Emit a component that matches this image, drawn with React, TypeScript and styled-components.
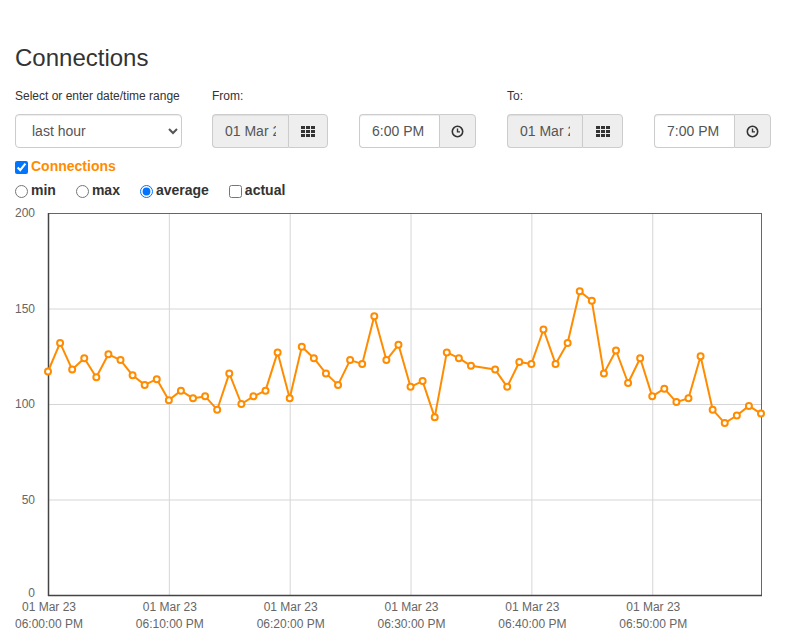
import React from "react";
import styled, { createGlobalStyle } from "styled-components";

const GlobalStyle = createGlobalStyle`
  html, body { margin: 0; padding: 0; background: #fff; }
  body {
    font-family: "Liberation Sans", Arial, Helvetica, sans-serif;
    font-size: 14px;
    line-height: 1.42857;
    color: #333;
  }
  * { box-sizing: border-box; }
`;

const Page = styled.div`
  padding: 0 15px;
`;

const Title = styled.h2`
  margin: 45px 0 17px;
  font-size: 24px;
  font-weight: 400;
  line-height: 1.1;
  color: #333;
`;

const FilterRow = styled.div`
  display: flex;
  align-items: flex-end;
`;

const Field = styled.div<{ $ml?: number }>`
  display: flex;
  flex-direction: column;
  margin-left: ${(p) => p.$ml ?? 0}px;
`;

const FieldLabel = styled.label`
  display: block;
  height: 17px;
  margin-bottom: 9px;
  font-size: 12px;
  line-height: 17px;
  color: #333;
`;

const Select = styled.select`
  width: 167px;
  height: 34px;
  padding: 6px 12px;
  font-family: "Liberation Sans", Arial, sans-serif;
  font-size: 14px;
  color: #555;
  background: #fff;
  border: 1px solid #ccc;
  border-radius: 4px;
  box-shadow: inset 0 1px 1px rgba(0, 0, 0, 0.075);
`;

const Group = styled.div`
  display: flex;
  height: 34px;
`;

const GroupInput = styled.input<{ $w: number; $grey?: boolean }>`
  width: ${(p) => p.$w}px;
  height: 34px;
  padding: 6px 12px;
  font-family: "Liberation Sans", Arial, sans-serif;
  font-size: 14px;
  color: #555;
  background: ${(p) => (p.$grey ? "#eee" : "#fff")};
  border: 1px solid #ccc;
  border-right: 0;
  border-radius: 4px 0 0 4px;
  box-shadow: inset 0 1px 1px rgba(0, 0, 0, 0.075);
  outline: none;
`;

const Addon = styled.span<{ $w: number }>`
  display: flex;
  align-items: center;
  justify-content: center;
  width: ${(p) => p.$w}px;
  height: 34px;
  background: #eee;
  border: 1px solid #ccc;
  border-radius: 0 4px 4px 0;
  color: #555;
`;

const CheckRow = styled.div`
  display: flex;
  align-items: center;
  height: 20px;
  margin-top: 9px;
`;

const OptionRow = styled.div`
  display: flex;
  align-items: center;
  height: 20px;
  margin-top: 4px;
`;

const Option = styled.label`
  display: inline-flex;
  align-items: center;
  margin-right: 20px;
  font-weight: 700;
  font-size: 14px;
  color: #333;
`;

const Box = styled.input`
  width: 13px;
  height: 13px;
  margin: 0 3px 0 0;
`;

const SeriesLabel = styled.label`
  display: inline-flex;
  align-items: center;
  font-weight: 700;
  font-size: 14px;
  color: #ff8c00;
`;

const ChartSvg = styled.svg`
  display: block;
  margin-top: 3px;
  font-family: "Liberation Sans", Arial, sans-serif;
`;

const GridIcon = () => (
  <svg width="14" height="11" viewBox="0 0 14 11">
    {[0, 1, 2].map((r) =>
      [0, 1, 2].map((c) => (
        <rect key={`${r}-${c}`} x={c * 5} y={r * 4} width="4" height="3" fill="#333" />
      ))
    )}
  </svg>
);

const ClockIcon = () => (
  <svg width="13" height="13" viewBox="0 0 13 13">
    <circle cx="6.5" cy="6.5" r="5.2" fill="none" stroke="#333" strokeWidth="1.6" />
    <path d="M6.5 3.4 V6.9 H9" fill="none" stroke="#333" strokeWidth="1.4" />
  </svg>
);

const values: (number | null)[] = [
  117, 132, 118, 124, 114, 126, 123, 115, 110, 113,
  102, 107, 103, 104, 97, 116, 100, 104, 107, 127,
  103, 130, 124, 116, 110, 123, 121, 146, 123, 131,
  109, 112, 93, 127, 124, 120, null, 118, 109, 122,
  121, 139, 121, 132, 159, 154, 116, 128, 111, 124,
  104, 108, 101, 103, 125, 97, 90, 94, 99, 95,
];

const PL = 33;
const PR = 746;
const PT = 9;
const PB = 391;
const xs = (m: number) => PL + (m * (PR - PL)) / 59;
const ys = (v: number) => PT + ((200 - v) * (PB - PT)) / 200;

const Chart = () => {
  const pts = values
    .map((v, i) => (v === null ? null : { x: xs(i), y: ys(v) }))
    .filter((p): p is { x: number; y: number } => p !== null);
  const d = pts.map((p, i) => `${i ? "L" : "M"}${p.x.toFixed(1)} ${p.y.toFixed(1)}`).join(" ");
  const yTicks = [0, 50, 100, 150, 200];
  const xTicks = [0, 10, 20, 30, 40, 50];
  return (
    <ChartSvg width={757} height={430} viewBox="0 0 757 430">
      {yTicks.map((t) => (
        <g key={t}>
          {t !== 0 && t !== 200 && (
            <line x1={PL} x2={PR} y1={ys(t) + 0.5} y2={ys(t) + 0.5} stroke="#d6d6d6" strokeWidth="1" />
          )}
          <text x={20} y={ys(t) + (t === 0 ? 2 : 4)} textAnchor="end" fontSize="12" fill="#666">
            {t}
          </text>
        </g>
      ))}
      {xTicks.map((m, i) => (
        <g key={m}>
          {m !== 0 && (
            <line x1={xs(m) + 0.5} x2={xs(m) + 0.5} y1={PT} y2={PB} stroke="#d6d6d6" strokeWidth="1" />
          )}
          <text x={xs(m) + 1} y={407} textAnchor="middle" fontSize="12" fill="#666">
            01 Mar 23
          </text>
          <text x={xs(m) + 1} y={424} textAnchor="middle" fontSize="12" fill="#666">
            {`06:${String(i * 10).padStart(2, "0")}:00 PM`}
          </text>
        </g>
      ))}
      <rect x={PL + 0.5} y={PT + 0.5} width={PR - PL} height={PB - PT} fill="none" stroke="#666" strokeWidth="1" />
      <line x1={PL + 0.5} x2={PL + 0.5} y1={PT} y2={PB + 1} stroke="#444" strokeWidth="1.5" />
      <line x1={PL} x2={PR + 1} y1={PB + 0.5} y2={PB + 0.5} stroke="#444" strokeWidth="1.5" />
      <path d={d} fill="none" stroke="#ff8c00" strokeWidth="2" strokeLinejoin="round" />
      {pts.map((p, i) => (
        <circle key={i} cx={p.x} cy={p.y} r="3" fill="#fff" stroke="#ff8c00" strokeWidth="2" />
      ))}
    </ChartSvg>
  );
};

export default function App() {
  return (
    <>
      <GlobalStyle />
      <Page>
        <Title>Connections</Title>
        <FilterRow>
          <Field>
            <FieldLabel>Select or enter date/time range</FieldLabel>
            <Select defaultValue="hour">
              <option value="hour">last hour</option>
              <option value="day">last day</option>
              <option value="week">last week</option>
            </Select>
          </Field>
          <Field $ml={30}>
            <FieldLabel>From:</FieldLabel>
            <Group>
              <GroupInput $w={76} $grey readOnly value="01 Mar 2023" />
              <Addon $w={40}>
                <GridIcon />
              </Addon>
            </Group>
          </Field>
          <Field $ml={31}>
            <FieldLabel />
            <Group>
              <GroupInput $w={80} readOnly value="6:00 PM" />
              <Addon $w={37}>
                <ClockIcon />
              </Addon>
            </Group>
          </Field>
          <Field $ml={31}>
            <FieldLabel>To:</FieldLabel>
            <Group>
              <GroupInput $w={75} $grey readOnly value="01 Mar 2023" />
              <Addon $w={41}>
                <GridIcon />
              </Addon>
            </Group>
          </Field>
          <Field $ml={31}>
            <FieldLabel />
            <Group>
              <GroupInput $w={80} readOnly value="7:00 PM" />
              <Addon $w={37}>
                <ClockIcon />
              </Addon>
            </Group>
          </Field>
        </FilterRow>
        <CheckRow>
          <SeriesLabel>
            <Box type="checkbox" defaultChecked />
            Connections
          </SeriesLabel>
        </CheckRow>
        <OptionRow>
          <Option>
            <Box type="radio" name="agg" />
            min
          </Option>
          <Option>
            <Box type="radio" name="agg" />
            max
          </Option>
          <Option>
            <Box type="radio" name="agg" defaultChecked />
            average
          </Option>
          <Option>
            <Box type="checkbox" />
            actual
          </Option>
        </OptionRow>
        <Chart />
      </Page>
    </>
  );
}
